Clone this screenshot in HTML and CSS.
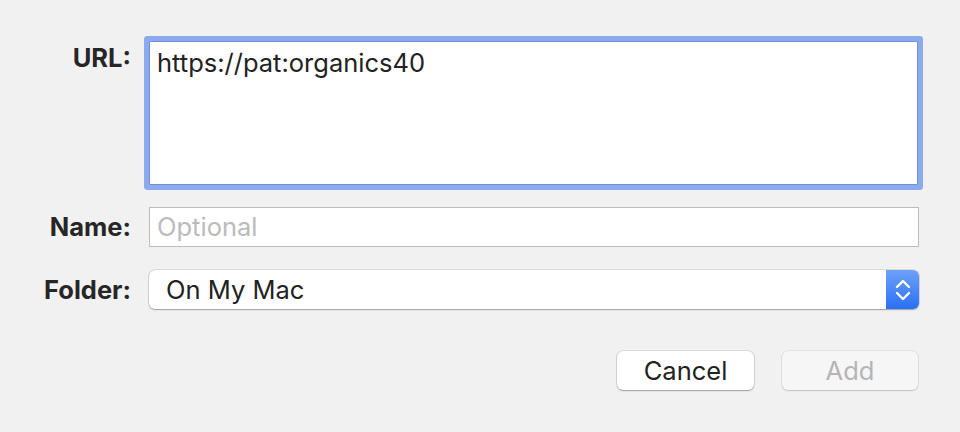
FILE: index.html
```html
<!DOCTYPE html>
<html>
<head>
<meta charset="utf-8">
<link rel="stylesheet" href="styles.css">
</head>
<body>
<div class="sheet">
  <div class="row row-url">
    <label class="label label-top">URL:</label>
    <div class="field field-url">https://pat:organics40</div>
  </div>
  <div class="row row-name">
    <label class="label">Name:</label>
    <div class="field field-text placeholder">Optional</div>
  </div>
  <div class="row row-folder">
    <label class="label">Folder:</label>
    <div class="popup">
      <span class="popup-text">On My Mac</span>
      <span class="stepper">
        <svg width="18" height="24" viewBox="0 0 18 24">
          <path d="M3 9 L9 3 L15 9" fill="none" stroke="#fff" stroke-width="2.4" stroke-linecap="round" stroke-linejoin="round"/>
          <path d="M3 15 L9 21 L15 15" fill="none" stroke="#fff" stroke-width="2.4" stroke-linecap="round" stroke-linejoin="round"/>
        </svg>
      </span>
    </div>
  </div>
  <div class="buttons">
    <button class="btn">Cancel</button>
    <button class="btn btn-disabled">Add</button>
  </div>
</div>
</body>
</html>
```
FILE: styles.css
```css
html, body {
  margin: 0;
  padding: 0;
  background: #f1f1f1;
  width: 960px;
  height: 432px;
  overflow: hidden;
  font-family: Inter, "Noto Sans", sans-serif;
  color: #222;
}
.sheet {
  padding: 41px 41px 0 0;
  display: flex;
  flex-direction: column;
}
.row {
  display: flex;
  align-items: center;
  gap: 18px;
}
.row-url {
  align-items: flex-start;
}
.label {
  width: 131px;
  text-align: right;
  font-weight: 700;
  font-size: 25.5px;
  color: #262626;
  flex: none;
  line-height: 30px;
}
.label-top {
  margin-top: 2px;
}
.field {
  width: 770px;
  box-sizing: border-box;
  background: #fff;
  font-size: 25.5px;
}
.field-url {
  height: 144px;
  border: 1px solid #6e92dc;
  border-radius: 1px;
  box-shadow: 0 0 0 5px #8cabee;
  padding: 6px 7px;
  line-height: 30px;
  color: #222;
  margin-right: 1px;
}
.row-name {
  margin-top: 22px;
}
.field-text {
  height: 40px;
  border: 1px solid #bdbdbd;
  padding: 3px 7px;
  line-height: 32px;
}
.placeholder {
  color: #bbbbbb;
}
.row-folder {
  margin-top: 23px;
}
.popup {
  width: 770px;
  height: 39px;
  box-sizing: border-box;
  background: #fff;
  border-radius: 6px;
  box-shadow: 0 0 0 0.5px rgba(0,0,0,0.18), 0 1px 1.5px rgba(0,0,0,0.28);
  display: flex;
  align-items: center;
  justify-content: space-between;
  font-size: 25.5px;
  overflow: hidden;
}
.popup-text {
  padding-left: 17px;
  color: #222;
}
.stepper {
  width: 33px;
  height: 100%;
  background: linear-gradient(#6ea2f8, #2a6ff6);
  display: flex;
  align-items: center;
  justify-content: center;
}
.buttons {
  display: flex;
  justify-content: flex-end;
  gap: 28px;
  margin-top: 42px;
  padding-right: 1px;
}
.btn {
  width: 137px;
  height: 39px;
  border: none;
  background: #fff;
  border-radius: 6px;
  box-shadow: 0 0 0 0.5px rgba(0,0,0,0.18), 0 1px 1.5px rgba(0,0,0,0.28);
  font-family: Inter, "Noto Sans", sans-serif;
  font-size: 25.5px;
  color: #222;
  padding: 0;
}
.btn-disabled {
  width: 136px;
  background: #f6f6f6;
  color: #b5b5b5;
  box-shadow: 0 0 0 0.5px rgba(0,0,0,0.12), 0 1px 1.5px rgba(0,0,0,0.14);
}
```
